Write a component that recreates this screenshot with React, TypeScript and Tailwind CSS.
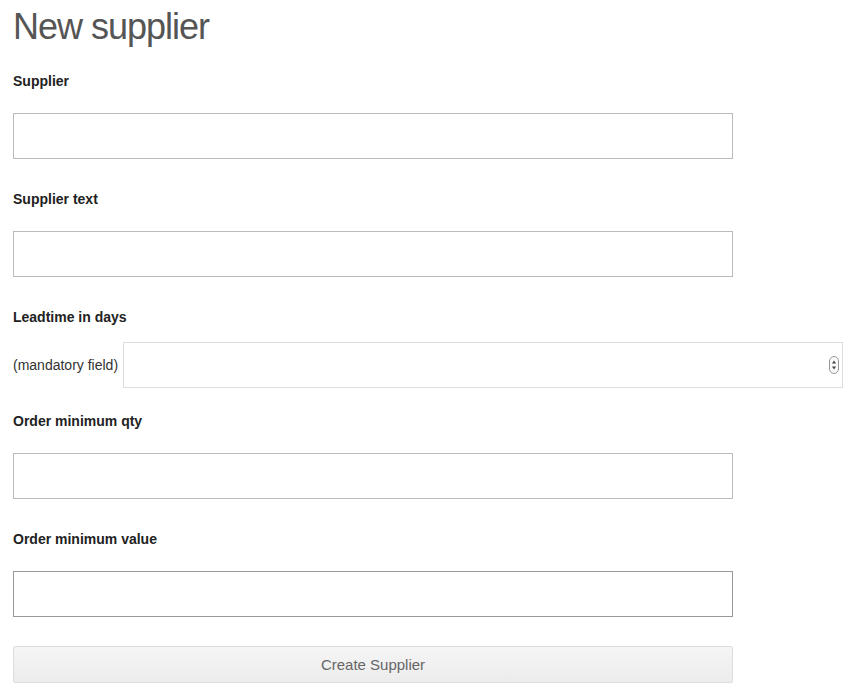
export default function App() {
  return (
    <div className="min-h-screen bg-white px-[13px] pt-[5px] font-['Liberation_Sans',Arial,sans-serif] text-[#222]">
      <h1 className="text-[36px] leading-[44px] tracking-[-1px] text-[#555] font-normal">
        New supplier
      </h1>
      <form className="flex flex-col" onSubmit={(e) => e.preventDefault()}>
        <label className="mt-[22px] text-[14px] leading-[20px] font-bold">Supplier</label>
        <input
          type="text"
          className="mt-[22px] w-[720px] h-[46px] border border-[#bbb] bg-white outline-none"
        />

        <label className="mt-[30px] text-[14px] leading-[20px] font-bold">Supplier text</label>
        <input
          type="text"
          className="mt-[22px] w-[720px] h-[46px] border border-[#bbb] bg-white outline-none"
        />

        <label className="mt-[30px] text-[14px] leading-[20px] font-bold">Leadtime in days</label>
        <div className="mt-[15px] flex items-center">
          <span className="text-[14px] leading-[20px] mr-[5px] text-[#333]">(mandatory field)</span>
          <div className="relative">
            <input
              type="text"
              className="w-[720px] h-[46px] border border-[#ddd] bg-white outline-none"
            />
            <svg
              className="absolute right-[3px] top-[13px]"
              width="12"
              height="20"
              viewBox="0 0 12 20"
            >
              <rect x="1.5" y="1.5" width="9" height="17" rx="4.5" fill="#fafafa" stroke="#999" />
              <path d="M4 8.5 L6 5.5 L8 8.5 Z" fill="#444" />
              <path d="M4 11.5 L6 14.5 L8 11.5 Z" fill="#444" />
            </svg>
          </div>
        </div>

        <label className="mt-[23px] text-[14px] leading-[20px] font-bold">Order minimum qty</label>
        <input
          type="text"
          className="mt-[22px] w-[720px] h-[46px] border border-[#bbb] bg-white outline-none"
        />

        <label className="mt-[30px] text-[14px] leading-[20px] font-bold">Order minimum value</label>
        <input
          type="text"
          className="mt-[22px] w-[720px] h-[46px] border border-[#999] bg-white outline-none"
        />

        <button
          type="submit"
          className="mt-[29px] w-[720px] h-[37px] pt-[2px] rounded-[2px] border border-[#ddd] bg-gradient-to-b from-[#f5f5f5] to-[#ececec] text-[15px] text-[#666]"
        >
          Create Supplier
        </button>
      </form>
    </div>
  );
}
